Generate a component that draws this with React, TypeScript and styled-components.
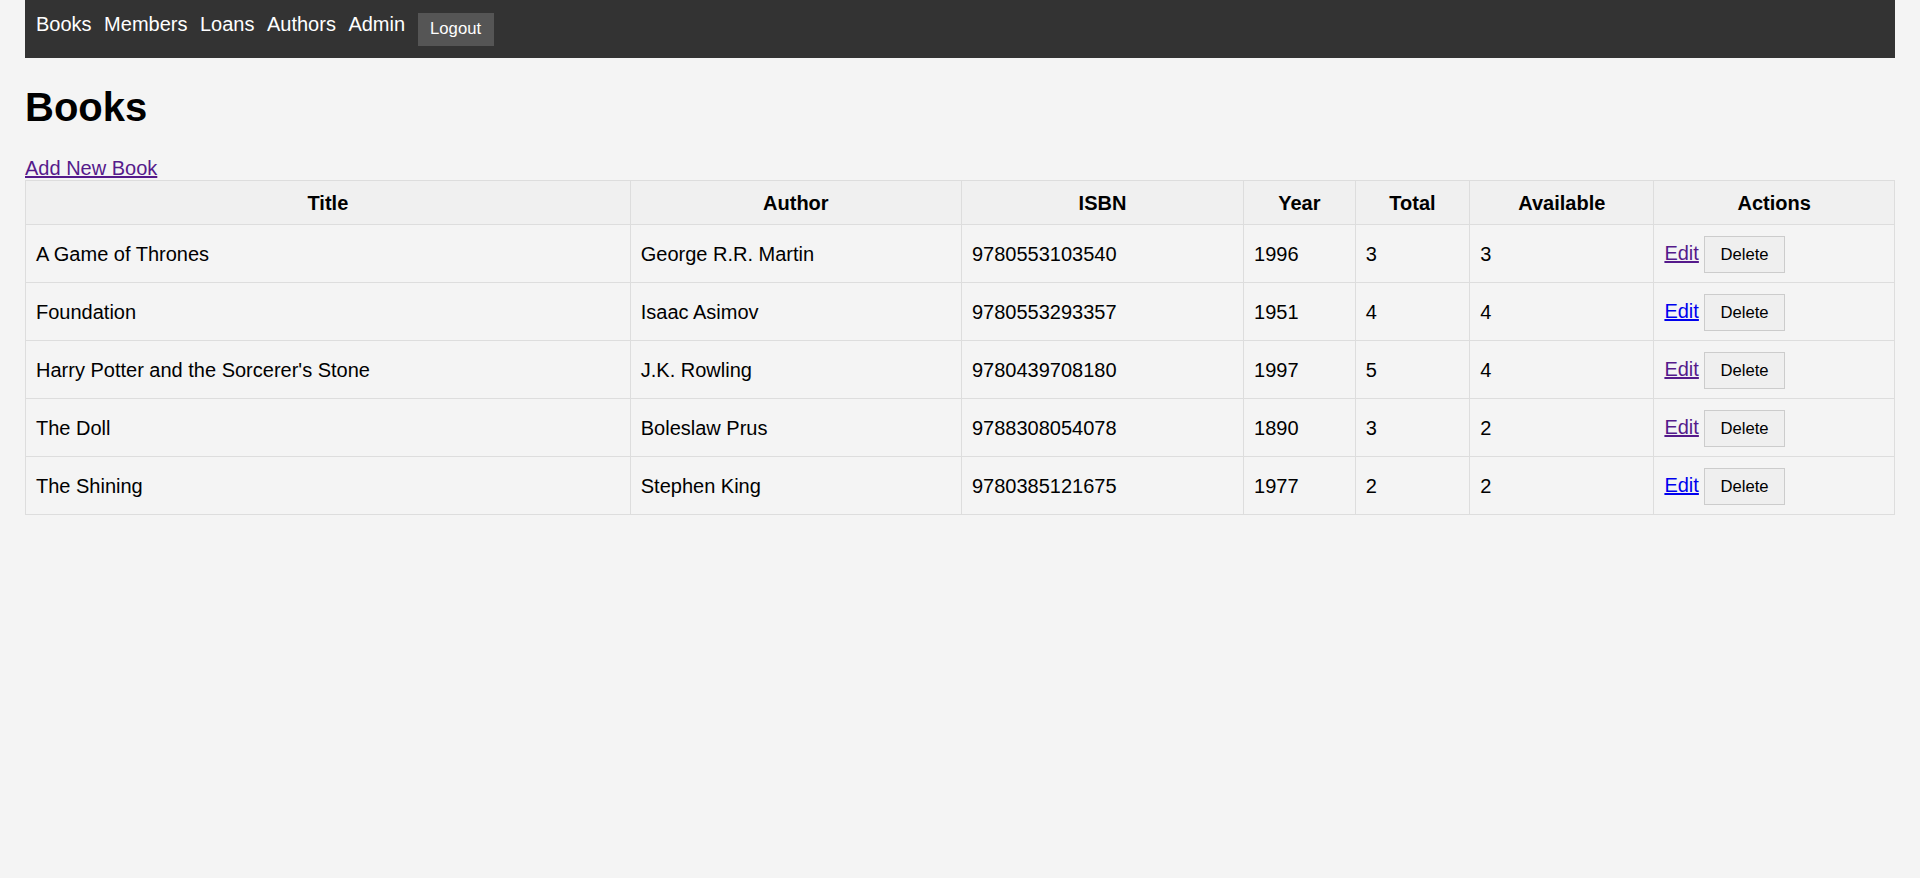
import styled, { createGlobalStyle } from 'styled-components';

const GlobalStyle = createGlobalStyle`
  body {
    margin: 0;
    padding: 0 25px;
    background: #f4f4f4;
    font-family: "Liberation Sans", Arial, sans-serif;
    font-size: 20px;
    color: #000;
  }
`;

type Book = {
  title: string;
  author: string;
  isbn: string;
  year: number;
  total: number;
  available: number;
  seen: boolean;
};

const books: Book[] = [
  { title: 'A Game of Thrones', author: 'George R.R. Martin', isbn: '9780553103540', year: 1996, total: 3, available: 3, seen: true },
  { title: 'Foundation', author: 'Isaac Asimov', isbn: '9780553293357', year: 1951, total: 4, available: 4, seen: false },
  { title: "Harry Potter and the Sorcerer's Stone", author: 'J.K. Rowling', isbn: '9780439708180', year: 1997, total: 5, available: 4, seen: true },
  { title: 'The Doll', author: 'Boleslaw Prus', isbn: '9788308054078', year: 1890, total: 3, available: 2, seen: true },
  { title: 'The Shining', author: 'Stephen King', isbn: '9780385121675', year: 1977, total: 2, available: 2, seen: false },
];

const Nav = styled.nav`
  display: flex;
  align-items: flex-start;
  gap: 12.5px;
  background: #333;
  padding: 12.5px 11px 12.5px 11px;
`;

const NavLink = styled.a`
  color: #fff;
  text-decoration: none;
  font-size: 20px;
`;

const LogoutButton = styled.button`
  background: #555;
  color: #fff;
  border: none;
  padding: 6.5px 12.5px;
  font-family: "Liberation Sans", Arial, sans-serif;
  font-size: 16.67px;
  cursor: pointer;
`;

const Title = styled.h1`
  font-size: 40px;
  margin: 26.8px 0;
`;

const TextLink = styled.a<{ $seen?: boolean }>`
  color: ${(p) => (p.$seen ? '#551a8b' : '#0000ee')};
  text-decoration: underline;
`;

const Table = styled.table`
  width: 100%;
  border-collapse: collapse;
  border: 1px solid #ddd;
`;

const Th = styled.th`
  background: #f0f0f0;
  border: 1px solid #ddd;
  padding: 11px 10px 9px;
  font-weight: bold;
  text-align: center;
`;

const Td = styled.td`
  border: 1px solid #ddd;
  padding: 11px 10px 9px;
  text-align: left;
  vertical-align: middle;
`;

const DeleteButton = styled.button`
  background: #efefef;
  border: 1px solid #ccc;
  color: #000;
  padding: 8px 15px 7px;
  font-family: "Liberation Sans", Arial, sans-serif;
  font-size: 16.67px;
  cursor: pointer;
`;

export default function App() {
  return (
    <>
      <GlobalStyle />
      <Nav>
        <NavLink href="#">Books</NavLink>
        <NavLink href="#">Members</NavLink>
        <NavLink href="#">Loans</NavLink>
        <NavLink href="#">Authors</NavLink>
        <NavLink href="#">Admin</NavLink>
        <LogoutButton>Logout</LogoutButton>
      </Nav>
      <Title>Books</Title>
      <div>
        <TextLink href="#" $seen>
          Add New Book
        </TextLink>
      </div>
      <Table>
        <thead>
          <tr>
            <Th>Title</Th>
            <Th>Author</Th>
            <Th>ISBN</Th>
            <Th>Year</Th>
            <Th>Total</Th>
            <Th>Available</Th>
            <Th>Actions</Th>
          </tr>
        </thead>
        <tbody>
          {books.map((b) => (
            <tr key={b.isbn}>
              <Td>{b.title}</Td>
              <Td>{b.author}</Td>
              <Td>{b.isbn}</Td>
              <Td>{b.year}</Td>
              <Td>{b.total}</Td>
              <Td>{b.available}</Td>
              <Td>
                <TextLink href="#" $seen={b.seen}>
                  Edit
                </TextLink>{' '}
                <DeleteButton>Delete</DeleteButton>
              </Td>
            </tr>
          ))}
        </tbody>
      </Table>
    </>
  );
}
